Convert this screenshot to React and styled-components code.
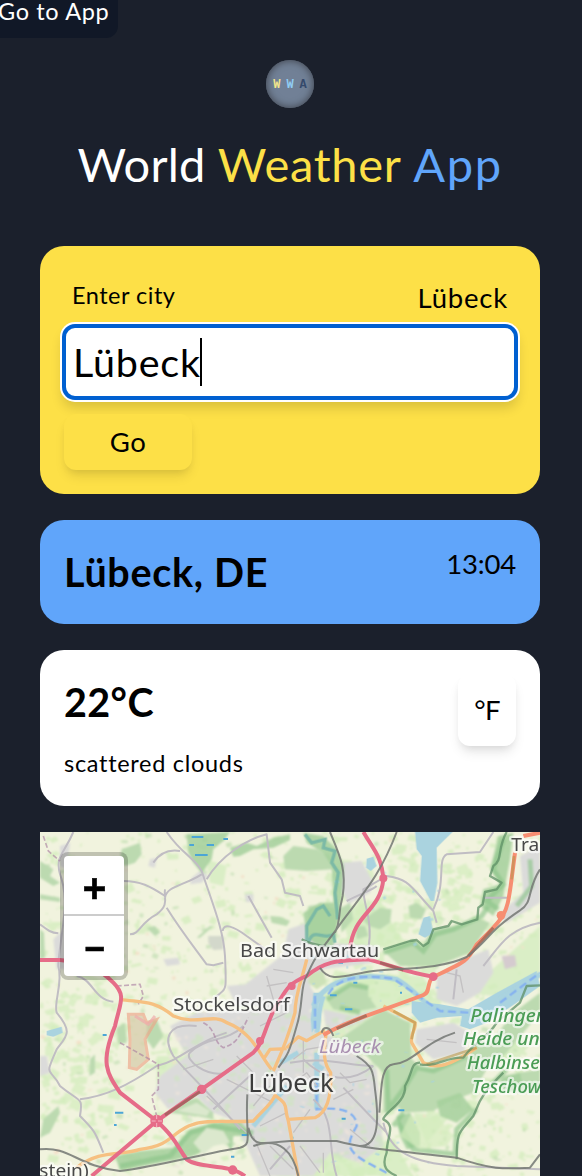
import React, { useState } from "react";
import styled, { createGlobalStyle } from "styled-components";

const GlobalStyle = createGlobalStyle`
  *, *::before, *::after { box-sizing: border-box; }
  html, body { margin: 0; padding: 0; background: #1b202c; }
  body {
    height: 1176px;
    overflow: hidden;
    font-family: Lato, "Open Sans", sans-serif;
    color: #000;
  }
  h1, h2, p { margin: 0; font-weight: 400; }
`;

const Page = styled.div`
  display: flex;
  flex-direction: column;
  height: 1176px;
  overflow: hidden;
`;

const SkipLink = styled.a`
  align-self: flex-start;
  width: 118px;
  height: 38px;
  background: #111827;
  color: #fff;
  border-bottom-right-radius: 12px;
  font-size: 23.5px;
  line-height: 23px;
  letter-spacing: 0.65px;
  text-indent: -2px;
  white-space: nowrap;
  text-decoration: none;
`;

const Header = styled.header`
  display: flex;
  flex-direction: column;
  align-items: center;
  width: 500px;
  height: 208px;
  margin-left: 40px;
  padding-top: 22px;
`;

const Logo = styled.div`
  display: flex;
  align-items: center;
  justify-content: center;
  gap: 6px;
  width: 48px;
  height: 48px;
  padding-top: 2px;
  border-radius: 50%;
  background: #718096;
  box-shadow: inset 0 0 7px 1px #454a55;
  font: 700 12px/12px "Liberation Mono", monospace;
`;

const Word = styled.span`
  color: ${(p) => p.$color};
  letter-spacing: ${(p) => p.$track || 0}px;
`;

const Title = styled.h1`
  margin-top: 27px;
  font-size: 47px;
  line-height: 58px;
  white-space: nowrap;
  color: #fff;
`;

const Main = styled.main`
  display: flex;
  flex-direction: column;
  gap: 26px;
  width: 500px;
  margin-left: 40px;
`;

const Card = styled.section`
  display: flex;
  flex-direction: ${(p) => (p.$column ? "column" : "row")};
  justify-content: ${(p) => (p.$column ? "flex-start" : "space-between")};
  flex: none;
  height: ${(p) => p.$height}px;
  padding: 24px;
  border-radius: 24px;
  background: ${(p) => p.$color};
`;

const LabelRow = styled.div`
  display: flex;
  justify-content: space-between;
  height: 54px;
  padding: 10px 8px 0;
`;

const Text = styled.p`
  font-size: ${(p) => p.$size}px;
  line-height: ${(p) => p.$line}px;
  letter-spacing: ${(p) => p.$track || 0}px;
  white-space: nowrap;
`;

const Field = styled.div`
  display: flex;
  flex: none;
  align-items: center;
  height: 76px;
  margin: 0 -2px;
  padding-left: 7px;
  border: 4px solid #0060d1;
  border-radius: 13px;
  background: #fff;
  box-shadow: 0 0 0 2px #fff, 0 8px 12px 0 rgba(0, 0, 0, 0.14);
  font-size: 39.5px;
  line-height: 48px;
  letter-spacing: 0.8px;
`;

const Caret = styled.span`
  width: 2px;
  height: 48px;
  margin-left: -1px;
  background: #000;
`;

const Button = styled.button`
  display: flex;
  align-items: center;
  justify-content: center;
  flex: none;
  width: ${(p) => p.$width}px;
  height: ${(p) => p.$height}px;
  margin-top: ${(p) => p.$top || 0}px;
  padding: 0;
  border: 0;
  border-radius: 12px;
  background: ${(p) => p.$color};
  box-shadow: 0 8px 12px -2px rgba(0, 0, 0, 0.1), 0 4px 8px -4px rgba(0, 0, 0, 0.1);
  font: 400 27.5px/40px Lato, sans-serif;
  letter-spacing: ${(p) => p.$track || 0}px;
  color: #000;
`;

const Bold = styled.h2`
  font-size: 39.5px;
  font-weight: 700;
  line-height: 56px;
  letter-spacing: ${(p) => p.$track || 0}px;
  white-space: nowrap;
`;

const MapFrame = styled.section`
  display: grid;
  flex: none;
  height: 344px;
  overflow: hidden;
  background: #f1f3de;
  > * { grid-area: 1 / 1; }
`;

const ZoomControl = styled.div`
  z-index: 1;
  width: 68px;
  height: 128px;
  margin: 20px;
  border: 4px solid rgba(0, 0, 0, 0.2);
  border-radius: 8px;
  background: #fff;
  background-clip: padding-box;
`;

const ZoomButton = styled.div`
  display: flex;
  align-items: center;
  justify-content: center;
  height: 60px;
  padding: 6px 0 0 1px;
  border-bottom: ${(p) => (p.$divided ? "2px solid #ccc" : "0")};
  font: 700 ${(p) => p.$size}px/54px "Liberation Sans", sans-serif;
  -webkit-text-stroke: 0.4px #000;
  color: #000;
`;

/* Small deterministic generator for fields, hedges and house blocks. */
function scatter(count, seed, size, box = [0, 18, 1500, 1032]) {
  let s = seed;
  const next = () => {
    s = (s * 16807) % 2147483647;
    return s / 2147483647;
  };
  return Array.from({ length: count }, () => {
    const x = Math.round(box[0] + next() * box[2]);
    const y = Math.round(box[1] + next() * box[3]);
    const w = Math.round(size * (0.3 + next()));
    const h = Math.round(size * (0.2 + next() * 0.7));
    const k = Math.round((next() - 0.5) * size * 0.9);
    return `M${x} ${y}l${w} ${k}l${-k} ${h}l${-w} ${-k}z`;
  }).join("");
}

const MEADOW = scatter(420, 71, 26) + scatter(900, 19, 11);
const LIGHT_MEADOW =
  scatter(110, 405, 34, [860, 100, 420, 420]) + scatter(70, 92, 34, [0, 420, 230, 500]) + scatter(60, 512, 30, [660, 920, 400, 130]);
const GROVE = scatter(130, 913, 16);
const HAMLET = scatter(90, 377, 10);
const TOWN_GREEN = scatter(200, 5511, 18, [380, 560, 640, 460]);
const TOWN_LIGHT = scatter(120, 881, 11, [380, 560, 640, 460]);
const PONDS = scatter(45, 2027, 10, [780, 80, 420, 950]);

const URBAN = [
  "M905 110L965 105 1000 170 990 200 925 235 900 180z",
  "M660 440L730 385 745 310 800 290 850 350 1010 360 1000 410 850 430 810 480 840 530 800 560 750 620 700 560 650 540 600 540 610 480z",
  "M560 480L620 475 650 530 590 540z",
  "M390 600L470 560 640 550 700 540 830 560 840 620 900 640 1010 730 1020 870 1030 960 960 1010 870 980 820 1050 660 1050 620 960 570 880 520 860 470 810 385 850 345 800 360 750 440 690z",
  "M850 550L940 570 1030 545 960 590 860 620z",
  "M1270 400L1345 370 1360 440 1320 500 1250 540 1190 520 1190 450z",
  "M1130 610L1240 590 1290 620 1270 680 1180 700 1125 650z",
  "M1440 90L1500 60 1500 230 1450 260 1400 290 1370 270 1450 200z",
  "M330 100L350 95 345 125 325 120z",
  "M455 155L480 135 505 150 485 170 450 175z",
  "M370 400L415 395 420 415 380 420z",
  "M615 205L640 205 640 228 618 228z",
  "M55 325L75 310 75 430 50 430 40 340z",
  "M0 690L20 690 30 740 0 750z",
  "M60 60L90 50 80 130 60 120z",
];

const WOODS = [
  "M245 70L300 50 305 85 285 110 255 120 240 100z",
  "M0 105L40 130 30 150 60 170 40 180 0 155z",
  "M0 205L60 215 60 228 0 220z",
  "M0 310L12 320 15 395 0 400z",
  "M320 305L345 300 360 320 345 330z",
  "M510 300L520 300 480 335 470 335z",
  "M730 90L760 60 830 70 870 90 880 130 800 135 735 130z",
  "M690 270L720 272 750 285 740 300 695 290z",
  "M805 240L850 235 885 250 890 330 840 350 800 340z",
  "M895 250L930 230 940 280 905 320z",
  "M970 280L1020 245 1055 250 1050 290 1020 310 985 300z",
  "M1105 240L1130 230 1158 250 1145 280 1110 275z",
  "M1030 375L1120 340 1145 365 1175 310 1240 300 1320 280 1350 290 1290 380 1190 420 1080 420z",
  "M945 300L975 300 985 330 950 340z",
  "M895 640L1030 550 1110 590 1115 700 1140 720 1110 770 1070 850 1030 860 1030 740 980 690z",
  "M1130 725L1180 725 1285 690 1310 650 1360 640 1420 560 1500 500 1500 560 1400 680 1340 730 1300 800 1220 830 1180 855 1085 860 1070 830z",
  "M860 520L930 475 960 470 985 480 985 510 1010 545 930 560 880 550z",
  "M1380 750L1500 730 1500 800 1420 800z",
  "M230 605L255 590 260 650 235 655z",
  "M320 590L350 580 370 630 340 670 320 640z",
  "M10 880L55 840 60 860 30 920 0 935z",
  "M150 700L165 685 165 740 148 750z",
  "M385 860L420 830 470 815 520 860 520 880 470 870z",
];

const RESERVE = [
  "M440 25L570 18 550 45 520 70 515 100 485 142 460 110 445 80z",
  "M570 65L620 50 650 60 700 35 750 25 750 42 700 65 640 70 600 90 580 92z",
  "M790 20L850 30 890 70 912 120 905 220 892 300 880 360 830 360 800 330 790 260 840 230 880 230 875 120 850 80 800 50z",
  "M1375 30L1420 20 1410 100 1390 210 1360 270 1320 240 1330 190 1380 175 1350 130z",
  "M225 990L300 975 400 965 450 910 520 890 600 885 640 930 580 930 575 980 550 930 500 920 470 950 500 970 460 990 240 1035z",
  "M1190 825L1260 800 1300 850 1250 890 1200 870z",
  "M1070 870L1110 860 1140 920 1140 960 1100 970 1080 930z",
  "M1380 760L1440 740 1450 790 1390 800z",
];

const WATER = [
  "M1125 18L1238 18 1210 45 1190 65 1192 170 1182 225 1172 225 1140 165 1145 90 1130 70z",
  "M980 98L1000 92 1010 120 992 135 978 125z",
  "M1150 275L1170 270 1180 320 1155 335 1135 325z",
  "M1115 525L1200 535 1285 550 1370 500 1490 435 1500 480 1430 530 1340 590 1290 610 1260 600 1265 570 1190 575 1140 590 1115 560z",
  "M20 615L65 602 68 620 40 632 20 628z",
  "M820 500L850 500 835 530 835 590 815 620 812 580z",
];

const GREY_ROADS = [
  "M100 18C70 90 40 90 65 160C90 240 55 360 55 420C70 470 40 530 50 560C100 620 80 630 50 670C10 760 30 720 60 780C120 830 130 810 120 870C170 920 165 920 190 980",
  "M0 295C20 310 30 320 55 322",
  "M110 450C160 460 160 520 220 527",
  "M250 165C300 165 330 180 375 210M375 215C380 180 430 180 485 145",
  "M380 18C430 90 460 90 485 135C520 240 550 310 555 390C560 510 560 480 520 520",
  "M270 325C300 325 300 290 350 265C390 235 370 215 375 190",
  "M380 245C420 310 460 360 500 415L520 418 550 410",
  "M548 315C550 290 580 300 620 330L690 380M625 210L695 335",
  "M340 110C360 80 390 70 420 75M500 160C540 90 620 40 680 25L690 110 725 160 735 200 780 210 790 240",
  "M120 820C200 810 260 780 350 720C430 700 460 650 560 620",
  "M470 600C380 590 370 640 400 690C440 740 500 790 600 910M560 740C500 755 430 700 450 680C500 630 560 650 610 600",
  "M985 370C1000 280 970 240 970 190L1040 150C1110 160 1110 180 1180 255L1190 290M1180 250C1220 170 1190 100 1220 85L1320 78L1360 18",
  "M920 225C970 200 1000 190 1010 180",
  "M1330 215L1410 215M1500 290C1400 310 1380 360 1330 420",
  "M750 710C860 690 920 720 1000 720M790 700C830 740 910 790 1000 720",
  "M820 820C890 880 860 960 890 1050M910 785C990 870 980 860 1040 920",
  "M1030 890C1050 980 1120 1010 1250 1020L1500 1030",
  "M520 850L640 740M690 1030L750 960M1250 430L1240 520",
];

const STREETS = [
  "M500 810L620 920M560 760L700 830M640 930L690 1050M660 900L740 860M760 920L810 850M780 960L840 1040M690 960L760 1030M640 840L690 780M750 780L800 740 830 780M760 700L800 670 860 660M790 640L790 740M880 820L940 790M900 740L930 770 980 760M660 600L740 560M590 690L640 740M430 730L520 700M680 480L740 470M700 430L760 440M680 450L700 520M1220 440L1260 450 1270 500M1160 640L1250 650M850 980L850 1040M930 910L990 960",
];

const RAIL = [
  "M870 18C900 90 920 130 908 210C890 280 905 280 885 320",
  "M1070 18C1020 150 970 200 900 295C840 380 830 380 800 450C780 480 790 540 770 600C745 690 740 690 715 725",
  "M840 425C870 475 920 445 1000 435C1100 425 1200 430 1280 393C1350 340 1340 320 1440 253C1480 230 1460 190 1500 130",
  "M0 970C90 960 110 1020 240 1035C360 1020 500 980 600 965C640 955 615 930 622 805",
  "M625 905C640 970 670 950 750 945L890 945C980 970 1080 975 1250 995C1350 1030 1390 1030 1470 1025L1500 985",
  "M640 960C720 930 760 980 775 1050",
  "M950 690C1000 720 1000 740 1005 790C1020 900 1010 960 960 960M1018 860C1025 790 1020 720 1060 715C1120 710 1150 650 1245 620",
  "M845 620C850 600 870 600 880 630",
];

const BORDERS = [
  "M1140 710C1110 710 1120 740 1095 780C1100 830 1030 860 1030 880C1070 900 1040 930 1040 980C1020 1030 1050 1040 1070 1050",
  "M1400 18C1370 70 1390 100 1360 120L1350 150 1385 170 1370 190 1335 198 1328 235 1315 245 1312 280 1265 295 1235 285 1225 300 1180 310 1165 350 1150 360 1130 342 1110 345 1030 370",
  "M1140 715C1190 725 1220 690 1270 695C1310 640 1340 640 1370 590L1440 530L1460 480L1500 478",
  "M1390 740C1310 820 1320 830 1300 870C1260 920 1250 910 1250 1000",
  "M785 340C840 370 870 350 895 375",
];

const PRIMARY = [
  "M240 520C300 530 340 520 400 570C470 600 520 560 560 590C640 620 660 690 695 730",
  "M110 1025C180 970 240 990 300 970C400 960 400 910 460 895C500 880 560 890 640 885C670 850 690 840 705 808C750 840 730 840 745 885L775 1050",
  "M670 700L690 670 740 668M700 735C720 690 740 650 765 560C765 500 790 450 800 400",
  "M740 665L775 632 800 644 855 613M858 625C850 680 850 710 872 740C875 810 860 860 825 875L745 880",
  "M1030 540L1125 590C1130 610 1110 620 1115 650L1150 710C1190 730 1230 720 1310 665",
];

const TRUNK = [
  "M850 627C930 580 1040 550 1150 507C1170 500 1160 480 1175 455C1270 410 1280 410 1310 355C1400 270 1400 260 1412 180L1425 80",
  "M1450 30L1500 20",
];

const MOTORWAY = [
  "M0 402L60 402C150 410 180 430 220 470C260 510 240 530 225 600C180 710 200 740 240 800L350 885C410 940 410 960 440 1000C480 1030 560 1010 615 1050",
  "M155 1050L350 885 485 790 640 680C670 650 670 620 700 555C740 490 740 475 800 450C860 400 900 405 985 400C1060 420 1100 440 1180 452",
  "M970 18C1000 70 1025 90 1030 160C1020 260 940 260 930 370",
];

const BLUE_LINES =
  "M455 33h35M448 57h14M500 57h22M465 87h38M550 39h14M188 627h12M225 860h25M222 897h8M605 927h20M940 470h12M573 992h10M1075 853h18M895 410h14M1080 500h6M915 550h22M905 878h12M870 508h20M750 935h10";

const Drawing = styled.svg`
  display: block;
  width: 500px;
  height: 344px;
`;

const Label = styled.text`
  font-family: "Noto Sans", sans-serif;
  font-style: ${(p) => (p.$italic ? "italic" : "normal")};
  font-weight: ${(p) => p.$weight || 400};
  font-size: ${(p) => p.$size}px;
  fill: ${(p) => p.$color || "#484848"};
  stroke: rgba(255, 255, 255, 0.6);
  stroke-width: 14px;
  stroke-linejoin: round;
  paint-order: stroke;
`;

function Strokes({ paths, color, width, opacity = 1 }) {
  return (
    <path d={paths.join("")} fill="none" stroke={color} strokeWidth={width} opacity={opacity} strokeLinejoin="round" />
  );
}

function MapLabel({ children, width, ...rest }) {
  return (
    <Label textLength={width} lengthAdjust="spacingAndGlyphs" {...rest}>
      {children}
    </Label>
  );
}

function CityMap() {
  return (
    <Drawing viewBox="0 18 1500 1032" aria-label="Map of Lübeck">
      <defs>
        <filter id="soft" x="-5%" y="-5%" width="110%" height="110%">
          <feGaussianBlur stdDeviation="3" />
        </filter>
        <filter id="line" x="-5%" y="-5%" width="110%" height="110%">
          <feGaussianBlur stdDeviation="1.8" />
        </filter>
      </defs>
      <rect y="18" width="1500" height="1032" fill="#f1f3de" />
      <g filter="url(#soft)">
        <path d="M900 250L1020 220 1080 340 940 400zM1280 500L1500 300 1500 440 1360 510zM890 640L830 520 900 440 1150 450 1180 520 1020 560zM500 100L560 120 550 180 510 170zM350 690L440 690 350 830zM850 980L1060 940 1120 1050 850 1050zM1120 860L1230 870 1160 950zM1280 700L1500 620 1400 740z" fill="#daeec6" />
        <path d={MEADOW} fill="#d3ecbc" opacity=".75" />
        <path d={LIGHT_MEADOW} fill="#d3ecbc" opacity=".7" />
        <path d={HAMLET} fill="#f3dfc8" />
        <path d={GROVE} fill="#b9dbaa" opacity=".6" />
        <path d={URBAN.join("")} fill="#dbdbda" />
        <path d={TOWN_GREEN} fill="#cfe6c0" opacity=".7" />
        <path d={TOWN_LIGHT} fill="#ebe3da" opacity=".9" />
        <path d={WOODS.join("")} fill="#bcdab0" />
        <path d={RESERVE.join("")} fill="#a5d09c" opacity=".85" />
        <path d="M1090 860L1060 900M1030 380L1120 350 1150 375 1185 325 1240 310 1325 270 1345 240M860 520L930 475 985 485M900 545L960 560M1040 730L1045 850 1090 790 1130 725 1180 735 1280 690M240 1020L390 990 450 920 520 900 640 920M1245 990L1250 910 1310 850M1400 730L1350 780M1075 890L1120 970 1245 985M1390 40L1360 130 1390 175 1340 225 1375 250M1470 100L1475 180 1430 240" fill="none" stroke="#8cc48a" strokeWidth="15" opacity=".65" />
        <path d="M460 950L500 905 550 915 570 950 520 960 490 985zM410 855L470 830 510 855 500 870zM1320 540L1370 550 1340 560z" fill="#dbe8cd" />
        <path d="M1385 390L1425 388 1430 420 1395 430z" fill="#d5cbcf" />
        <path d="M505 330L550 330 550 370 520 372 505 350z" fill="#d3d8cb" />
        <path d="M805 440L850 435 860 470 830 490 805 470z" fill="#cde2b8" />
        <path d="M1080 930L1110 870 1200 880 1240 930 1220 960 1140 970z" fill="#d5ecbf" opacity=".7" />
      </g>
      <g filter="url(#line)">
        <path d={WATER.join("")} fill="#aad3df" />
        <path d={PONDS} fill="#a5d2e4" opacity=".7" />
        <path d="M795 25L815 50 855 40 850 65 885 75 875 110 895 140 885 200 893 280M800 350L800 300 830 250 850 240 870 270M805 350C820 300 850 345 880 325L885 350" fill="none" stroke="#73b5a6" strokeWidth="10" opacity=".85" />
        <path d="M820 540C860 450 980 440 1070 460C1110 480 1130 510 1170 540M1380 520L1500 445M850 510C830 560 840 590 830 620M830 680L830 850M720 710L775 680M740 780L640 900M820 710L850 730" fill="none" stroke="#aad3df" strokeWidth="15" />
        <path d="M865 505C900 440 1000 450 1060 458L1200 555L1290 560M1380 530L1500 440M825 510L825 620M830 770L830 850C910 840 950 860 950 900C910 970 920 980 1050 1045" fill="none" stroke="#86b2ef" strokeWidth="7" strokeDasharray="24 13" />
        <path d="M265 565L310 565 320 590 350 580 315 640 325 700 290 730 268 725 270 640z" fill="#d3c7a3" opacity=".65" stroke="#eda588" strokeWidth="9" />
        <path d="M285 570L325 595 345 570" fill="none" stroke="#efabab" strokeWidth="9" opacity=".7" />
        <path d={BLUE_LINES} fill="none" stroke="#4ba5d6" strokeWidth="6" />
        <Strokes paths={STREETS} color="#c3c1c2" width={4} />
        <Strokes paths={GREY_ROADS} color="#c0bdc3" width={6} />
        <path d="M10 30L25 75 60 105M240 650L355 715 355 790 335 810 350 870M490 590C530 610 520 650 550 665C600 650 600 620 625 575M230 480L300 475 310 510 295 535" fill="none" stroke="#a67c9f" strokeWidth="5" opacity=".6" strokeDasharray="15 7" />
        <Strokes paths={PRIMARY} color="#f6c081" width={10} />
        <Strokes paths={TRUNK} color="#f78e72" width={12} />
        <Strokes paths={MOTORWAY} color="#e66c88" width={12} />
        <circle cx="350" cy="885" r="19" fill="#e66c88" />
        <circle cx="485" cy="790" r="14" fill="#e66c88" />
        <circle cx="578" cy="1032" r="14" fill="#e66c88" />
        <circle cx="660" cy="645" r="12" fill="#e66c88" />
        <circle cx="755" cy="480" r="12" fill="#e66c88" />
        <circle cx="1180" cy="452" r="13" fill="#e66c88" />
        <circle cx="1030" cy="157" r="12" fill="#e66c88" />
        <circle cx="1383" cy="268" r="13" fill="#f78e72" />
        <path d="M335 885h12M354 885h12M350 867v12M350 891v12" stroke="#f3b5c3" strokeWidth="3" />
        <path d="M375 867L480 797M1285 390L1360 305M890 608L980 568M1020 410L1090 432" stroke="#8c6051" strokeWidth="9" opacity=".65" />
        <path d="M1415 160L1422 90M1060 555L1125 590 1115 640M1160 715L1310 665" fill="none" stroke="#b8954d" strokeWidth="8" opacity=".6" />
        <Strokes paths={BORDERS} color="#5e8f66" width={7} opacity={0.75} />
        <Strokes paths={RAIL} color="#737773" width={6} opacity={0.85} />
      </g>
      <MapLabel x="600" y="394" $size="56" width="418">Bad Schwartau</MapLabel>
      <MapLabel x="400" y="554" $size="56" width="349">Stockelsdorf</MapLabel>
      <MapLabel x="625" y="797" $size="76" width="256" $color="#3c3c3c">Lübeck</MapLabel>
      <MapLabel x="837" y="680" $size="56" width="185" $italic $color="#a98fb0">Lübeck</MapLabel>
      <MapLabel x="1414" y="76" $size="56" width="84">Tra</MapLabel>
      <MapLabel x="-2" y="1052" $size="56" width="148">stein)</MapLabel>
      <MapLabel x="1291" y="588" $size="56" width="220" $italic $weight="500" $color="#4a9c55">Palinger</MapLabel>
      <MapLabel x="1269" y="658" $size="56" width="230" $italic $weight="500" $color="#4a9c55">Heide un</MapLabel>
      <MapLabel x="1281" y="730" $size="56" width="218" $italic $weight="500" $color="#4a9c55">Halbinse</MapLabel>
      <MapLabel x="1296" y="801" $size="56" width="208" $italic $weight="500" $color="#4a9c55">Teschow</MapLabel>
    </Drawing>
  );
}

export default function App() {
  const [city] = useState("Lübeck");
  return (
    <Page>
      <GlobalStyle />
      <SkipLink>Go to App</SkipLink>
      <Header>
        <Logo>
          <Word $color="#f2e58c">W</Word>
          <Word $color="#90cdf4">W</Word>
          <Word $color="#34496b">A</Word>
        </Logo>
        <Title>
          <Word $color="#fff" $track={0.2}>World </Word>
          <Word $color="#fde047" $track={0.7}>Weather </Word>
          <Word $color="#60a5fa" $track={1.6}>App</Word>
        </Title>
      </Header>
      <Main>
        <Card $column $height={248} $color="#fde047">
          <LabelRow>
            <Text $size={23.5} $line={31} $track={0.5}>Enter city</Text>
            <Text $size={27.5} $line={36} $track={0.8}>{city}</Text>
          </LabelRow>
          <Field>
            {city}
            <Caret />
          </Field>
          <Button $width={128} $height={56} $top={14} $track={0.5} $color="#fde047">Go</Button>
        </Card>
        <Card $height={104} $color="#60a5fa">
          <Bold $track={0.7}>{city}, DE</Bold>
          <Text $size={27.5} $line={40} $track={-0.2}>13:04</Text>
        </Card>
        <Card $height={156} $color="#fff">
          <div>
            <Bold $track={0.4}>22°C</Bold>
            <Text $size={23.5} $line={67} $track={0.7}>scattered clouds</Text>
          </div>
          <Button $width={58} $height={72} $track={-0.8} $color="#fff">°F</Button>
        </Card>
        <MapFrame>
          <CityMap />
          <ZoomControl>
            <ZoomButton $divided $size={41}>+</ZoomButton>
            <ZoomButton $size={36}>−</ZoomButton>
          </ZoomControl>
        </MapFrame>
      </Main>
    </Page>
  );
}
